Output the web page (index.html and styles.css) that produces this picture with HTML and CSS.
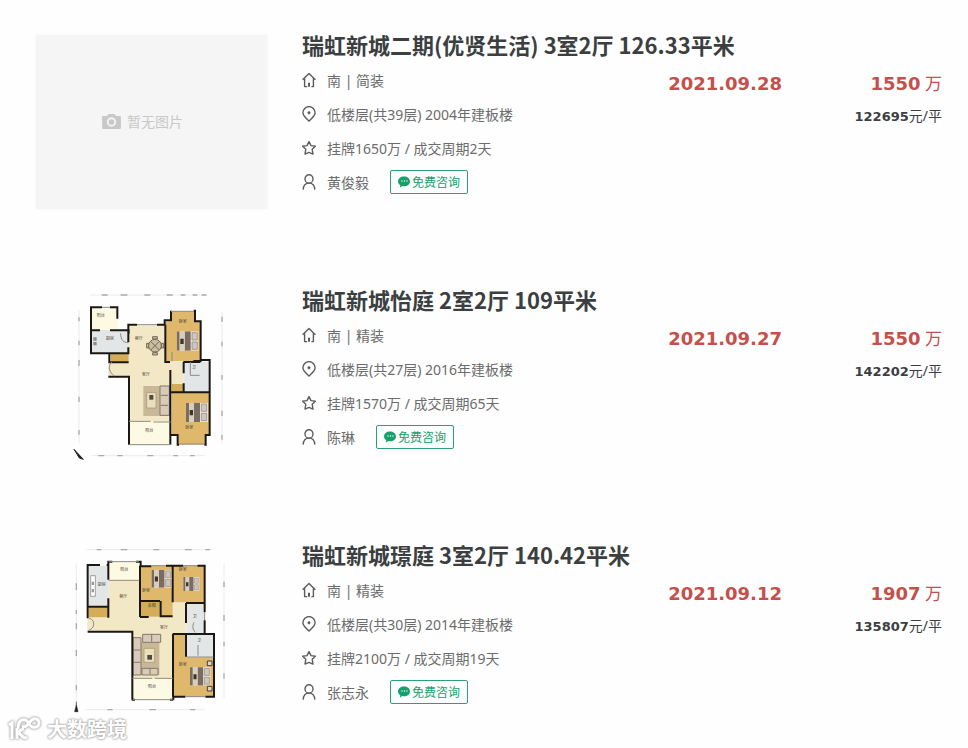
FILE: index.html
```html
<!DOCTYPE html>
<html lang="zh-CN">
<head>
    <meta charset="UTF-8">
    <meta name="viewport" content="width=device-width, initial-scale=1.0">
    <title>瑞虹新城成交记录</title>
    <link rel="stylesheet" href="styles.css">
</head>
<body>
    <svg class="sprite" aria-hidden="true">
        <symbol id="icon-house" viewBox="0 0 14 16">
            <path d="M.6 7.8 7 1.400l6.400 6.400M2.600 6.600v8h2.600M11.400 6.600v8H9.400"/>
            <path d="M7 14.800v-4" stroke-width="2"/>
        </symbol>
        <symbol id="icon-pin" viewBox="0 0 14 16">
            <path d="M7 15C4.200 12.200.9 9.800.9 6.700a6.100 6.100 0 0 1 12.200 0C13.100 9.800 9.800 12.200 7 15z"/>
            <circle cx="7" cy="6.800" r="1.200" fill="currentColor" stroke-width=".6"/>
        </symbol>
        <symbol id="icon-star" viewBox="0 0 14 16">
            <path d="M7 1.600l2 4 4.400.6-3.200 3.100.8 4.800L7 12.400l-4 1.700.8-4.800L.6 6.200 5 5.600z"/>
        </symbol>
        <symbol id="icon-user" viewBox="0 0 14 16">
            <ellipse cx="7" cy="4.900" rx="4" ry="4.200"/>
            <path d="M1.200 15.600c.2-4.200 2.200-6.500 5.800-6.500s5.600 2.300 5.800 6.500"/>
        </symbol>
        <symbol id="icon-chat" viewBox="0 0 12 12">
            <path d="M6 .5c3.300 0 6 2.100 6 4.900s-2.700 4.900-6 4.900c-.6 0-1.100 0-1.600-.2L2 11.400l.2-2.300C.8 8.200 0 6.900 0 5.400 0 2.600 2.700.5 6 .5z" fill="currentColor"/>
            <circle cx="4" cy="5" r=".7" fill="#fff"/>
            <circle cx="6.500" cy="5" r=".7" fill="#fff"/>
            <circle cx="9" cy="5" r=".7" fill="#fff"/>
        </symbol>
        <!-- furniture shared by both floor plans -->
        <symbol id="bed" viewBox="0 0 66 58">
            <path d="M0 0h66v58H0z" fill="#efe8dc"/>
            <path d="M0 0h9v58H0zM24 0h18v58H24z" fill="#7a6c60"/>
            <path d="M9 0h15v58H9z" fill="#d9cdbb"/>
            <path d="M11 22h10v16H11z" fill="#3d342e"/>
            <path d="M46 4h16v22H46zM46 32h16v22H46z" fill="#cfc6bd" stroke="#8d8178" stroke-width="2"/>
        </symbol>
    </svg>

    <ul class="house-list">
        <li class="house">
            <a class="thumb no-image" href="#">
                <svg class="camera" viewBox="0 0 20 16" aria-hidden="true">
                    <path fill-rule="evenodd" d="M1 2h4l2-2h6l2 2h4q1 0 1 1v12q0 1-1 1H1q-1 0-1-1V3q0-1 1-1zm9 1.500a5 5 0 1 0 0 10 5 5 0 0 0 0-10zm0 2a3 3 0 1 1 0 6 3 3 0 0 1 0-6z" fill="currentColor"/>
                </svg>
                <span>暂无图片</span>
            </a>
            <div class="info">
                <h2 class="title">瑞虹新城二期(优贤生活) 3室2厅 126.33平米</h2>
                <div class="content">
                    <ul class="details">
                        <li><svg class="icon"><use href="#icon-house"/></svg>南 | 简装</li>
                        <li><svg class="icon"><use href="#icon-pin"/></svg>低楼层(共39层) 2004年建板楼</li>
                        <li><svg class="icon"><use href="#icon-star"/></svg>挂牌1650万 / 成交周期2天</li>
                        <li><svg class="icon"><use href="#icon-user"/></svg>黄俊毅<button class="consult" type="button"><svg><use href="#icon-chat"/></svg>免费咨询</button></li>
                    </ul>
                    <div class="date">2021.09.28</div>
                    <div class="price">
                        <div class="total"><b>1550</b> 万</div>
                        <div class="unit"><b>122695</b>元/平</div>
                    </div>
                </div>
            </div>
        </li>

        <li class="house">
            <a class="thumb" href="#" aria-label="瑞虹新城怡庭户型图">
                <svg class="plan" viewBox="-72 30 693 522">
                    <g class="ruler">
                        <path d="M90 45H445M57 90V490M486 95V490M95 527H435"/>
                        <path class="ticks" d="M125 45h18M182 45h20M253 45h18M320 45h18M362 45h14M398 45h14M425 45h14M57 112v12M57 182v14M57 240v18M57 350v16M57 450v14M486 110v16M486 185v14M486 285v14M486 392v16M486 465v14M115 527h18M172 527h16M262 527h18M340 527h14M390 527h14"/>
                    </g>
                    <path class="living" d="M207 136h110v110h53v68h-37v110H207V290h-62v-45h62z"/>
                    <path class="balcony" d="M95 82h78v68H95zM207 424h126v70H207z"/>
                    <path class="kitchen" d="M95 150h112v68H95zM370 245h77v92h-77z"/>
                    <path class="bedroom" d="M333 94h72v30h15v120H317V124h16zM335 337h112v128h-12v29h-80v-29h-20z"/>
                    <path class="closet" d="M152 222h54v23h-54zM335 312h36v25h-36z"/>
                    <path class="rug" d="M250 318h72v90h-72z"/>
                    <path class="sofa" d="M300 318h28v88h-28zM302 346h22M302 376h22"/>
                    <path class="table" d="M260 338h28v46h-28z"/>
                    <path d="M268 345h12v14h-12z" fill="#51483f"/>
                    <g class="dining"><path d="M278 170h14v7h-14zM278 218h14v7h-14zM260 190h7v14h-7zM304 190h7v14h-7z"/><circle cx="285" cy="197" r="19"/><path d="M272 184l26 26M298 184l-26 26"/></g>
                    <path d="M100 172h10v10h-10zM100 186h10v10h-10z" fill="#8b8b89"/>
                    <use href="#bed" x="350" y="154" width="66" height="58"/>
                    <use href="#bed" x="378" y="368" width="66" height="58"/>
                    <path class="wall" d="M126 82H93v138h112v-18M150 82h22v34M95 151h25M150 151h56v10M205 186v-52h26M291 134h23v-13h19V92M401 92h4v32h17v119h-22M316 134v112h14M148 220v27h58M145 290h62v204M331 270v224M331 494v-29h22v29h4M371 246v34M370 246h51M422 240h27v225h-12v29h-4M371 310v27h76M331 337h40"/>
                    <path class="inner" d="M207 424h65M280 426h52M207 494h126M357 492h76M126 82h24M231 134h60M333 94h68M391 246v40h28M182 160c0 20 8 28 24 28M155 246c-12 14-8 30 8 42M336 216v28"/>
                    <g class="room-name">
                        <text x="122" y="110">阳台</text><text x="150" y="180">厨房</text><text x="236" y="180">餐厅</text><text x="258" y="288">客厅</text><text x="368" y="130">卧室</text><text x="402" y="266">卫</text><text x="268" y="456">阳台</text><text x="388" y="448">卧室</text>
                    </g>
                    <path d="M42 508l28 30-12-4-6-10z" fill="#222" stroke="#222" stroke-width="3"/>
                </svg>
            </a>
            <div class="info">
                <h2 class="title">瑞虹新城怡庭 2室2厅 109平米</h2>
                <div class="content">
                    <ul class="details">
                        <li><svg class="icon"><use href="#icon-house"/></svg>南 | 精装</li>
                        <li><svg class="icon"><use href="#icon-pin"/></svg>低楼层(共27层) 2016年建板楼</li>
                        <li><svg class="icon"><use href="#icon-star"/></svg>挂牌1570万 / 成交周期65天</li>
                        <li><svg class="icon"><use href="#icon-user"/></svg>陈琳<button class="consult" type="button"><svg><use href="#icon-chat"/></svg>免费咨询</button></li>
                    </ul>
                    <div class="date">2021.09.27</div>
                    <div class="price">
                        <div class="total"><b>1550</b> 万</div>
                        <div class="unit"><b>142202</b>元/平</div>
                    </div>
                </div>
            </div>
        </li>

        <li class="house">
            <a class="thumb" href="#" aria-label="瑞虹新城璟庭户型图">
                <svg class="plan" viewBox="-72 30 693 522">
                    <g class="ruler">
                        <path d="M80 44H460M49 85V515M492 85V490M75 524H435"/>
                        <path class="ticks" d="M110 44h14M182 44h20M280 44h18M375 44h20M436 44h14M49 145v20M49 225v12M49 265v18M49 345v18M49 450v16M492 140v16M492 240v18M492 320v14M492 415v16M142 524h16M268 524h20M390 524h16"/>
                    </g>
                    <path class="living" d="M146 136h94v110h98v-44h42v95h-42v132H217V290H82v-43h64z"/>
                    <path class="balcony" d="M146 80h94v56h-94zM215 430h124v64H215z"/>
                    <path class="kitchen" d="M86 92h60v122H86zM380 204h54v92h-54zM380 297h80v70h-80z"/>
                    <path class="bedroom" d="M240 92h98v152h-36v-45h-62zM338 92h94v110h-94zM338 297h42v70h80v118H338z"/>
                    <path class="closet" d="M86 217h60v30H86zM240 200h60v45h-60z"/>
                    <path class="rug" d="M240 322h58v98h-58z"/>
                    <path class="sofa" d="M248 298h54v24h-54zM219 308h24v112h-24zM246 400h48v20h-48zM275 298v22M221 345h20M221 382h20M270 400v18"/>
                    <path class="table" d="M252 340h32v42h-32z"/>
                    <path d="M262 360h14v14h-14z" fill="#51483f"/>
                    <path d="M92 122h14v62H92z" fill="#fff" stroke="#777" stroke-width="2"/>
                    <path d="M95 140h7v10h-7zM95 162h7v10h-7z" fill="#999"/>
                    <use href="#bed" x="274" y="104" width="62" height="54"/>
                    <use href="#bed" x="362" y="126" width="64" height="42" preserveAspectRatio="none"/>
                    <use href="#bed" x="390" y="396" width="62" height="56"/>
                    <path d="M442 378h14v14h-14zM442 454h14v14h-14z" fill="#ded5c9" stroke="#4a3c30" stroke-width="3"/>
                    <path class="wall" d="M120 90H83v160M83 290h134v204M140 90h5v-10h12M228 80h14v14h32M318 92h52M412 92h22v112M145 92v42M145 190v58M83 215h62M240 92v154M338 92v110M302 198v46h36M240 198h60M240 246h26M378 204h56v28M434 256v40M338 297h124v188h-26M376 485h-36v9M378 297v68M378 204v60M339 297v188M215 494h10M330 494h10"/>
                    <path class="inner" d="M146 80h90M146 136h92M274 92h44M370 92h42M217 430h60M284 430h54M218 494h120M376 485h60M380 366h80M88 250c18 4 18 30-2 36M402 262c-6 12-4 22 4 30M434 232v24M414 330v32"/>
                    <g class="room-name">
                        <text x="193" y="107">阳台</text><text x="125" y="152">厨房</text><text x="190" y="190">餐厅</text><text x="312" y="282">客厅</text><text x="258" y="170">卧室</text><text x="368" y="108">卧室</text><text x="275" y="217">衣帽</text><text x="404" y="248">卫</text><text x="418" y="320">卫</text><text x="368" y="394">卧室</text><text x="276" y="460">阳台</text>
                    </g>
                    <path d="M49 510l5 20H44zM49 500v12" fill="#222" stroke="#222" stroke-width="2"/>
                </svg>
            </a>
            <div class="info">
                <h2 class="title">瑞虹新城璟庭 3室2厅 140.42平米</h2>
                <div class="content">
                    <ul class="details">
                        <li><svg class="icon"><use href="#icon-house"/></svg>南 | 精装</li>
                        <li><svg class="icon"><use href="#icon-pin"/></svg>低楼层(共30层) 2014年建板楼</li>
                        <li><svg class="icon"><use href="#icon-star"/></svg>挂牌2100万 / 成交周期19天</li>
                        <li><svg class="icon"><use href="#icon-user"/></svg>张志永<button class="consult" type="button"><svg><use href="#icon-chat"/></svg>免费咨询</button></li>
                    </ul>
                    <div class="date">2021.09.12</div>
                    <div class="price">
                        <div class="total"><b>1907</b> 万</div>
                        <div class="unit"><b>135807</b>元/平</div>
                    </div>
                </div>
            </div>
        </li>
    </ul>

    <div class="watermark">
        <svg viewBox="0 0 36 26" aria-hidden="true">
            <path d="M2 8l3-2v16M10 11v11M17 12c-5 1-6 4-3 6 2 2 3 4 6 2"/>
            <path d="M11 12c0-4 1-8 4-9 4-1 5 1 7 4s4 4 7 3c4-1 4-7 0-8-3-1-5 1-7 4s-4 5-7 3"/>
        </svg>
        <span>大数跨境</span>
    </div>
</body>
</html>
```

FILE: styles.css
```css
* {
    box-sizing: border-box;
}
body {
    position: relative;
    margin: 0;
    padding: 29px 26px 29px 36px;
    background-color: #fefefe;
    color: #3c3f41;
    font-family: "Noto Sans", "Noto Sans CJK SC", sans-serif;
    font-size: 14px;
}
ul {
    margin: 0;
    padding: 0;
    list-style: none;
}
.sprite {
    position: absolute;
    width: 0;
    height: 0;
}
.house-list {
    display: flex;
    flex-direction: column;
    gap: 75px;
}
.house {
    display: flex;
    gap: 35px;
}
.thumb {
    flex: none;
    width: 231px;
    height: 174px;
    margin-top: 6px;
    text-decoration: none;
}
.no-image {
    display: flex;
    align-items: center;
    justify-content: center;
    gap: 6px;
    padding: 0 18px 2px 0;
    background-color: #f5f5f5;
    box-shadow: 0 0 3px #f5f5f5;
    color: #c8c8c8;
}
.camera {
    width: 19px;
    height: 15px;
}
.plan {
    display: block;
    width: 100%;
    height: 100%;
}
.info {
    flex: 1;
    min-width: 0;
}
.title {
    margin: 0 0 4px;
    font-family: "Noto Sans CJK SC", sans-serif;
    font-size: 22px;
    line-height: 30px;
}
.content {
    display: flex;
}
.details {
    flex: 1;
    color: #6c6c6c;
}
.details li {
    display: flex;
    align-items: center;
    height: 34px;
}
.icon {
    width: 14px;
    height: 16px;
    margin-right: 11px;
    fill: none;
    stroke: #5c5c5c;
    stroke-width: 1.4;
    stroke-linejoin: round;
    color: #5c5c5c;
}
.consult {
    display: flex;
    align-items: center;
    gap: 2px;
    height: 24px;
    margin-left: 21px;
    padding: 0 7px;
    border: 1px solid #2f9e78;
    border-radius: 2px;
    background-color: #fbfffd;
    color: #16a06c;
    font-family: inherit;
    font-size: 12px;
    cursor: pointer;
}
.consult svg {
    width: 12px;
    height: 12px;
}
.date,
.total b,
.unit b {
    font-family: "DejaVu Sans", sans-serif;
    font-weight: bold;
}
.date {
    color: #c5504b;
    font-size: 18px;
    line-height: 42px;
}
.price {
    width: 160px;
    text-align: right;
}
.total {
    color: #c5504b;
    font-size: 17px;
    line-height: 42px;
}
.total b {
    font-size: 18px;
}
.unit {
    line-height: 22px;
}
.unit b {
    font-size: 13px;
}

/* floor plans */
.ruler {
    fill: none;
    stroke: #e2e2e2;
    stroke-width: 2;
}
.ruler .ticks {
    stroke: #aaa;
    stroke-width: 4;
}
.living {
    fill: #f3e8c6;
}
.balcony {
    fill: #fdfae4;
}
.kitchen {
    fill: #e3e6e6;
}
.bedroom {
    fill: #e0b86c;
}
.closet {
    fill: #d5ac58;
}
.rug {
    fill: #c9b897;
}
.sofa {
    fill: #d8cbb9;
    stroke: #857668;
    stroke-width: 3;
}
.table {
    fill: #eadfbd;
    stroke: #a38e68;
    stroke-width: 2;
}
.dining {
    fill: #c9bfa0;
    stroke: #716852;
    stroke-width: 3;
}
.wall {
    fill: none;
    stroke: #1b1714;
    stroke-width: 6;
}
.inner {
    fill: none;
    stroke: #8d8a84;
    stroke-width: 3;
}
.room-name {
    fill: #4a4238;
    font-size: 12px;
    text-anchor: middle;
}

.watermark {
    position: absolute;
    bottom: 4px;
    left: 7px;
    display: flex;
    align-items: center;
    gap: 4px;
    color: #fff;
    font-size: 20px;
    font-weight: bold;
    line-height: 28px;
    text-shadow: 0 0 2px #aaa, 0 0 2px #aaa, 0 0 3px #bbb;
}
.watermark svg {
    width: 36px;
    height: 26px;
    fill: none;
    stroke: #fff;
    stroke-width: 3;
    filter: drop-shadow(0 0 1px #999) drop-shadow(0 0 1px #ccc);
}
```
